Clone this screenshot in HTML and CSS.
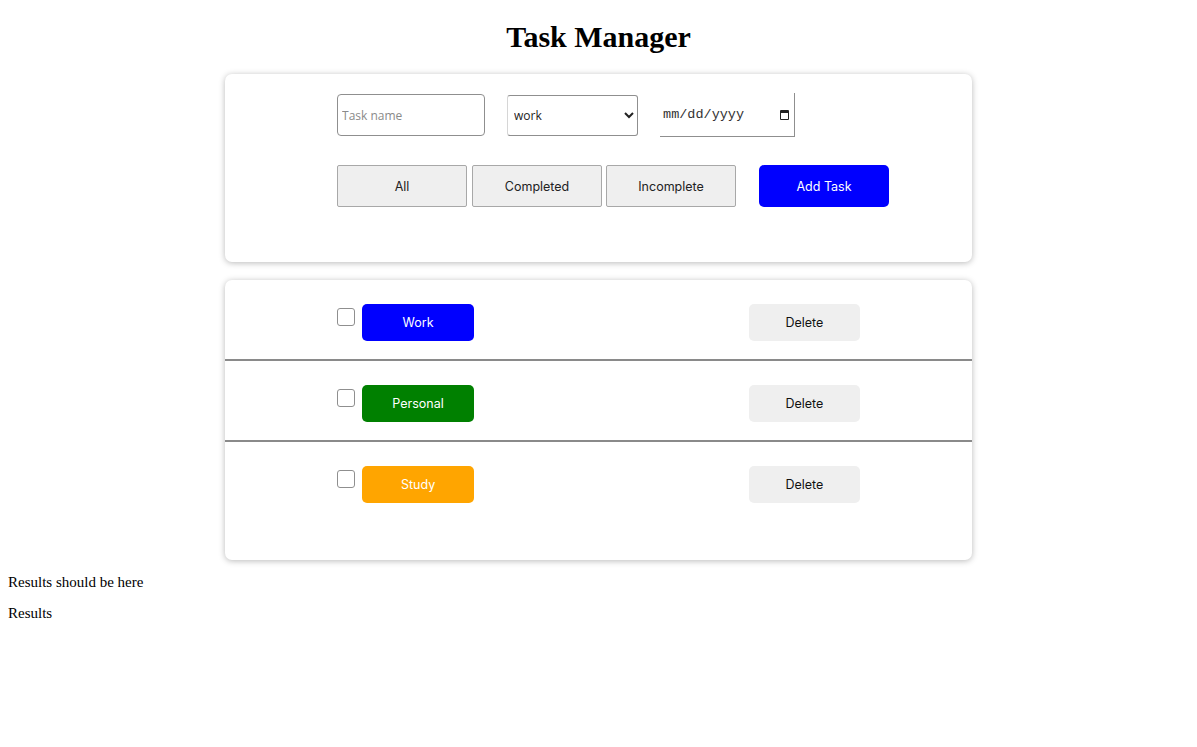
FILE: index.html
```html
<!DOCTYPE html>
<html lang="en">
<head>
<meta charset="utf-8">
<title>Task Manager</title>
<link rel="stylesheet" href="styles.css">
</head>
<body>
<h1 class="title">Task Manager</h1>
<section class="card form-card">
  <div class="inner">
    <div class="form-row">
      <input class="field task-input" type="text" placeholder="Task name">
      <select class="field category-select">
        <option>work</option>
        <option>personal</option>
        <option>study</option>
      </select>
      <div class="date-field"><span class="date-text">mm/dd/yyyy</span><span class="cal-icon"></span></div>
    </div>
    <div class="button-row">
      <button class="filter-btn">All</button>
      <button class="filter-btn">Completed</button>
      <button class="filter-btn">Incomplete</button>
      <button class="add-btn">Add Task</button>
    </div>
  </div>
</section>
<section class="card list-card">
  <div class="task-row">
    <div class="inner task-inner">
      <div class="task-left">
        <input class="check" type="checkbox">
        <span class="tag tag-work">Work</span>
      </div>
      <button class="delete-btn">Delete</button>
    </div>
  </div>
  <div class="task-row">
    <div class="inner task-inner">
      <div class="task-left">
        <input class="check" type="checkbox">
        <span class="tag tag-personal">Personal</span>
      </div>
      <button class="delete-btn">Delete</button>
    </div>
  </div>
  <div class="task-row last">
    <div class="inner task-inner">
      <div class="task-left">
        <input class="check" type="checkbox">
        <span class="tag tag-study">Study</span>
      </div>
      <button class="delete-btn">Delete</button>
    </div>
  </div>
</section>
<p class="note">Results should be here</p>
<p class="note">Results</p>
</body>
</html>
```

FILE: styles.css
```css
body {
  margin: 8px;
  font-family: "Liberation Serif", "Times New Roman", serif;
  font-size: 15px;
  color: #000;
  background: #fff;
}

.title {
  font-size: 30px;
  font-weight: bold;
  text-align: center;
  margin: 12px 0 20px;
}

.card {
  width: 747px;
  margin: 0 auto;
  background: #fff;
  border-radius: 7px;
  box-shadow: 0 1px 6px rgba(0, 0, 0, 0.28);
  box-sizing: border-box;
}

.form-card {
  padding: 18px 0 55px;
  height: 188px;
}

.list-card {
  margin-top: 18px;
  padding-bottom: 38px;
}

.inner {
  width: 70%;
  margin: 0 auto;
}

.form-row {
  display: flex;
  align-items: center;
  gap: 22px;
  height: 46px;
}

.field {
  box-sizing: border-box;
  font-family: "Open Sans", "Noto Sans", sans-serif;
  font-size: 12px;
  background: #fff;
}

.task-input {
  flex-shrink: 0;
  width: 148px;
  height: 42px;
  border: 1px solid #8f8f8f;
  border-radius: 4px;
  padding: 0 4px;
  color: #222;
}

.task-input::placeholder {
  color: #8a8a8a;
}

.category-select {
  flex-shrink: 0;
  width: 131px;
  height: 41px;
  border: 1px solid #8f8f8f;
  border-left-color: #d6d6d6;
  border-radius: 3px;
  padding: 0 2px;
  color: #222;
}

.date-field {
  flex-shrink: 0;
  box-sizing: border-box;
  width: 135px;
  height: 44px;
  border-right: 1px solid #8f8f8f;
  border-bottom: 1px solid #8f8f8f;
  display: flex;
  align-items: center;
  justify-content: space-between;
  padding: 0 5px 0 3px;
}

.date-text {
  font-family: "Liberation Mono", "DejaVu Sans Mono", monospace;
  font-size: 13.5px;
  color: #333;
}

.cal-icon {
  width: 7px;
  height: 6px;
  border: 1.5px solid #222;
  border-top-width: 3px;
  border-radius: 1px;
}

.button-row {
  display: flex;
  margin-top: 27px;
}

.filter-btn {
  flex-shrink: 0;
  width: 130px;
  height: 42px;
  margin-right: 4px;
  background: #efefef;
  border: 1px solid #a8a8a8;
  border-radius: 2px;
  font-family: "Inter", "Noto Sans", sans-serif;
  font-size: 12.5px;
  color: #222;
}

.filter-btn:first-child {
  margin-right: 5px;
}

.filter-btn:nth-child(3) {
  margin-right: 23px;
}

.add-btn {
  flex-shrink: 0;
  width: 130px;
  height: 42px;
  background: #0000ff;
  color: #fff;
  border: none;
  border-radius: 5px;
  font-family: "Inter", "Noto Sans", sans-serif;
  font-size: 12.5px;
}

.task-row {
  padding: 24px 0 18px;
  border-bottom: 2px solid #8a8a8a;
}

.task-row.last {
  border-bottom: none;
  padding-bottom: 19px;
}

.task-inner {
  display: flex;
  justify-content: space-between;
  align-items: flex-start;
}

.task-left {
  display: flex;
  align-items: flex-start;
}

.check {
  appearance: none;
  -webkit-appearance: none;
  box-sizing: border-box;
  width: 18px;
  height: 18px;
  margin: 4px 7px 0 0;
  border: 1px solid #8f8f8f;
  border-radius: 3px;
  background: #fff;
}

.tag {
  display: flex;
  align-items: center;
  justify-content: center;
  width: 112px;
  height: 37px;
  border-radius: 5px;
  color: #fff;
  font-family: "Inter", "Noto Sans", sans-serif;
  font-size: 12.5px;
}

.tag-work { background: #0000ff; }
.tag-personal { background: #008000; }
.tag-study { background: #ffa500; }

.delete-btn {
  width: 111px;
  height: 37px;
  background: #efefef;
  border: none;
  border-radius: 5px;
  font-family: "Inter", "Noto Sans", sans-serif;
  font-size: 12.5px;
  color: #111;
}

.note {
  margin: 14px 0;
}
```
